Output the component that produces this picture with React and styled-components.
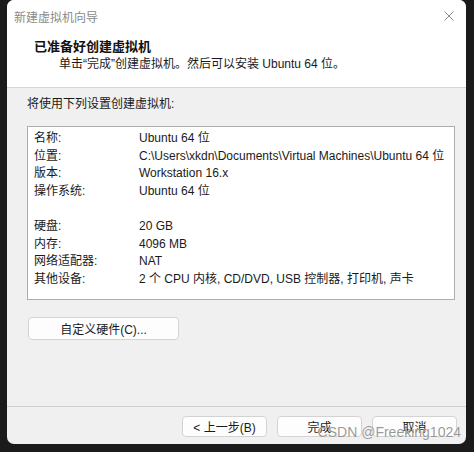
import React from "react";
import styled, { createGlobalStyle } from "styled-components";

const Global = createGlobalStyle`
  html, body { margin: 0; padding: 0; background: #1b1b1b; }
  body { font-family: "Liberation Sans", "Noto Sans CJK SC", sans-serif; }
`;

const Screen = styled.div`
  width: 474px;
  height: 452px;
  background: #1b1b1b;
  overflow: hidden;
`;

const Window = styled.div`
  position: relative;
  margin-left: 7px;
  width: 459px;
  height: 444px;
  background: #f0f0f0;
  border-radius: 7px;
  overflow: hidden;
  display: flex;
  flex-direction: column;
  color: #1a1a1a;
  font-size: 12px;
`;

const TitleBar = styled.div`
  height: 32px;
  background: #fff;
  display: flex;
  align-items: center;
  justify-content: space-between;
  padding: 0 12px 0 7px;
  font-size: 12px;
  color: #8a8a8a;
`;

const Close = styled.svg`
  width: 10px;
  height: 10px;
`;

const Header = styled.div`
  height: 56px;
  background: #fff;
  border-bottom: 1px solid #d6d6d6;
  display: flex;
  flex-direction: column;
  padding: 6px 0 0 27px;
  box-sizing: border-box;
`;

const HeadTitle = styled.div`
  font-size: 13px;
  font-weight: 700;
  line-height: 18px;
  color: #111;
`;

const HeadSub = styled.div`
  padding-left: 25px;
  line-height: 17px;
  color: #1a1a1a;
`;

const Body = styled.div`
  flex: 1;
  display: flex;
  flex-direction: column;
  padding: 8px 11px 0 20px;
  border-bottom: 1px solid #d0d0d0;
`;

const Intro = styled.div`
  line-height: 17px;
  margin-bottom: 13px;
`;

const SummaryBox = styled.div`
  height: 174px;
  box-sizing: border-box;
  background: #fff;
  border: 1px solid #adadad;
  padding: 3px 0 0 6px;
`;

const Row = styled.div`
  display: grid;
  grid-template-columns: 105px 1fr;
  height: 17.6px;
  line-height: 17.6px;
  white-space: nowrap;
`;

const Gap = styled.div`
  height: 17.6px;
`;

const Button = styled.button`
  font-family: inherit;
  font-size: 12px;
  color: #1a1a1a;
  background: #fdfdfd;
  border: 1px solid #d3d3d3;
  border-radius: 4px;
  padding: 0;
  width: ${(p) => p.$w}px;
  height: ${(p) => p.$h}px;
  box-sizing: border-box;
`;

const CustomWrap = styled.div`
  padding: 17px 0 0 1px;
`;

const Footer = styled.div`
  height: 37px;
  display: flex;
  justify-content: flex-end;
  align-items: flex-start;
  gap: 10px;
  padding: 9px 9px 0 0;
  box-sizing: border-box;
`;

const Watermark = styled.div`
  position: absolute;
  right: 5px;
  bottom: 4px;
  font-family: "Liberation Sans", Arial, sans-serif;
  font-size: 14px;
  color: rgba(120, 120, 120, 0.75);
  text-shadow: 0 0 1px rgba(255, 255, 255, 0.9);
  pointer-events: none;
`;

const rows1 = [
  ["名称:", "Ubuntu 64 位"],
  ["位置:", "C:\\Users\\xkdn\\Documents\\Virtual Machines\\Ubuntu 64 位"],
  ["版本:", "Workstation 16.x"],
  ["操作系统:", "Ubuntu 64 位"],
];
const rows2 = [
  ["硬盘:", "20 GB"],
  ["内存:", "4096 MB"],
  ["网络适配器:", "NAT"],
  ["其他设备:", "2 个 CPU 内核, CD/DVD, USB 控制器, 打印机, 声卡"],
];

export default function App() {
  return (
    <Screen>
      <Global />
      <Window>
        <TitleBar>
          <span>新建虚拟机向导</span>
          <Close viewBox="0 0 10 10">
            <path d="M0.5 0.5 L9.5 9.5 M9.5 0.5 L0.5 9.5" stroke="#8a8a8a" strokeWidth="1" fill="none" />
          </Close>
        </TitleBar>
        <Header>
          <HeadTitle>已准备好创建虚拟机</HeadTitle>
          <HeadSub>单击“完成”创建虚拟机。然后可以安装 Ubuntu 64 位。</HeadSub>
        </Header>
        <Body>
          <Intro>将使用下列设置创建虚拟机:</Intro>
          <SummaryBox>
            {rows1.map(([k, v]) => (
              <Row key={k}>
                <span>{k}</span>
                <span>{v}</span>
              </Row>
            ))}
            <Gap />
            {rows2.map(([k, v]) => (
              <Row key={k}>
                <span>{k}</span>
                <span>{v}</span>
              </Row>
            ))}
          </SummaryBox>
          <CustomWrap>
            <Button $w={151} $h={23}>自定义硬件(C)...</Button>
          </CustomWrap>
        </Body>
        <Footer>
          <Button $w={85} $h={21}>&lt; 上一步(B)</Button>
          <Button $w={85} $h={21}>完成</Button>
          <Button $w={85} $h={21}>取消</Button>
        </Footer>
        <Watermark>CSDN @Freeking1024</Watermark>
      </Window>
    </Screen>
  );
}
